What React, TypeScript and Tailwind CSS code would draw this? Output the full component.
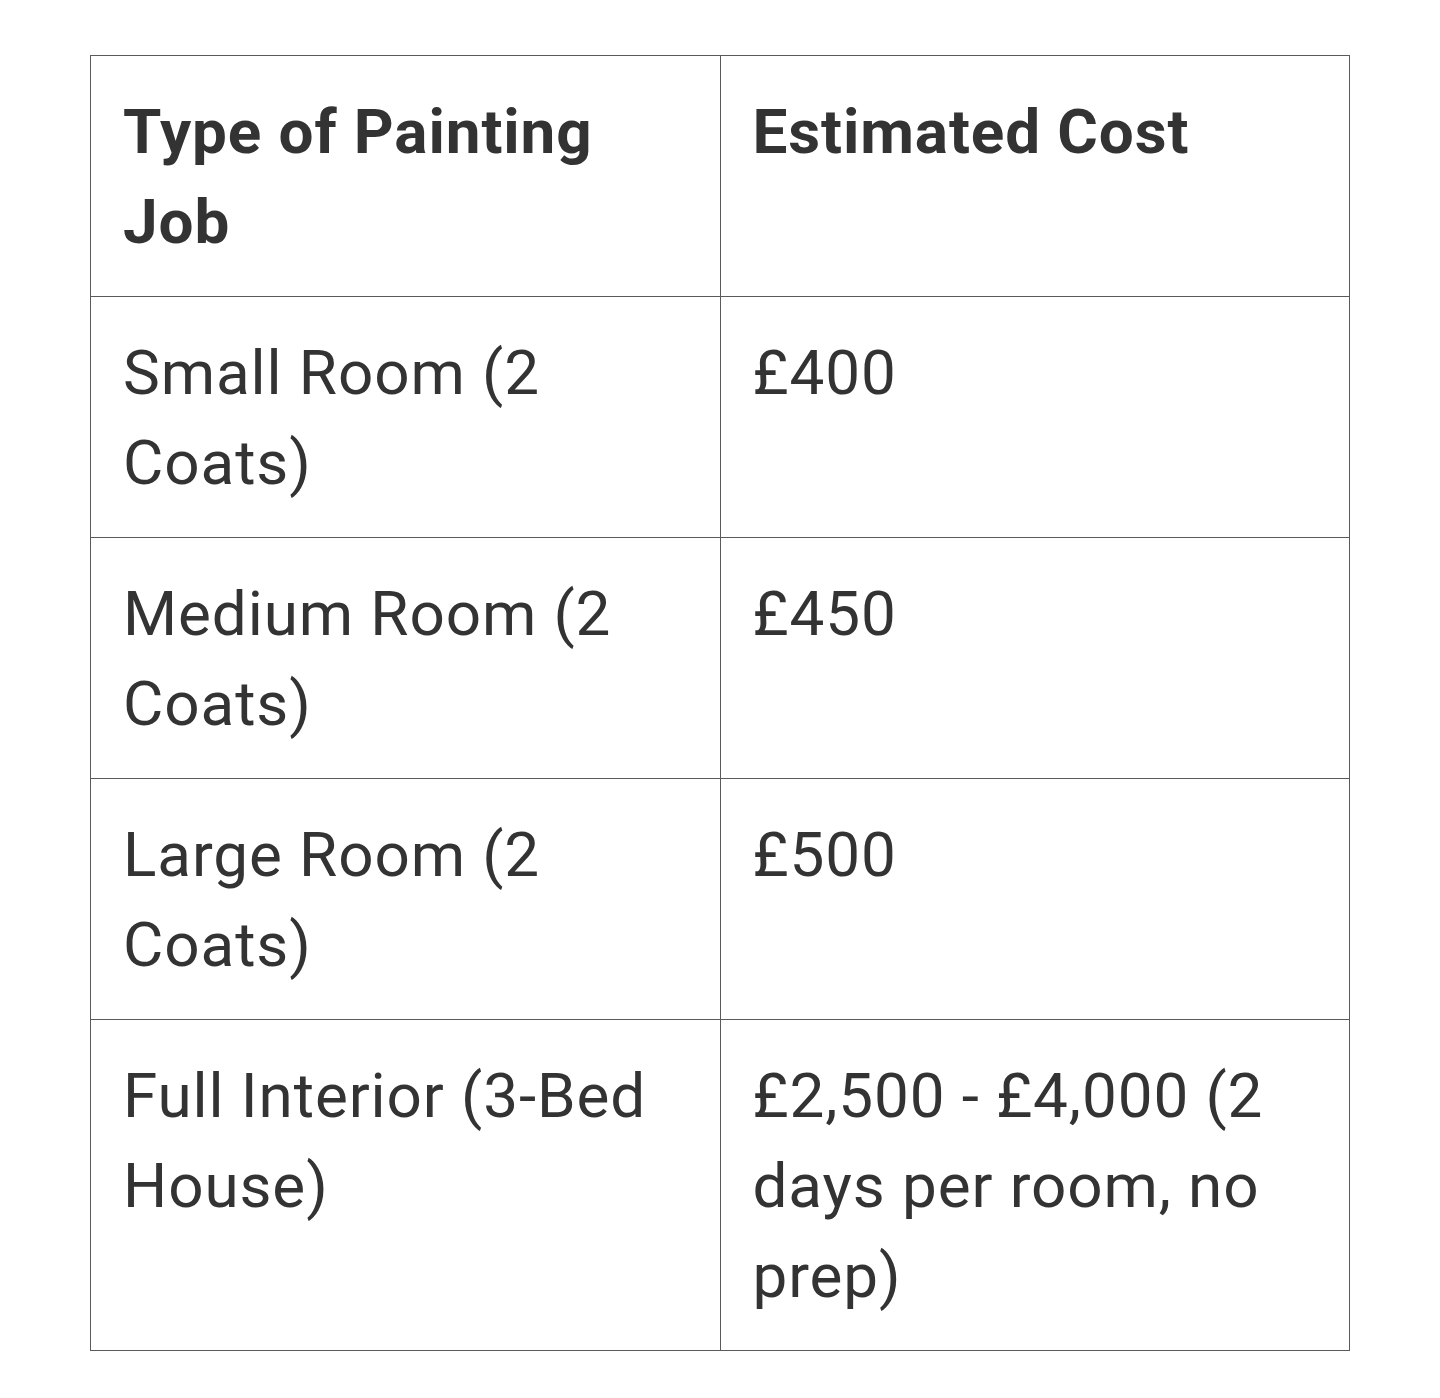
const rows = [
  ["Small Room (2 Coats)", "£400"],
  ["Medium Room (2 Coats)", "£450"],
  ["Large Room (2 Coats)", "£500"],
  ["Full Interior (3-Bed House)", "£2,500 - £4,000 (2 days per room, no prep)"],
];

export default function App() {
  return (
    <div className="min-h-[1398px] bg-white pt-[55px] px-[90px] font-['Roboto',sans-serif] text-[#333333]">
      <table className="w-[1260px] table-fixed border-collapse text-[62px] leading-[90px] tracking-[0.9px]">
        <thead>
          <tr>
            <th className="border border-[#5a5a5a] px-[32px] pt-[31px] pb-[29px] text-left align-top font-bold">
              Type of Painting Job
            </th>
            <th className="border border-[#5a5a5a] px-[32px] pt-[31px] pb-[29px] text-left align-top font-bold">
              Estimated Cost
            </th>
          </tr>
        </thead>
        <tbody>
          {rows.map(([type, cost]) => (
            <tr key={type}>
              <td className="border border-[#5a5a5a] px-[32px] pt-[31px] pb-[29px] align-top">{type}</td>
              <td className="border border-[#5a5a5a] px-[32px] pt-[31px] pb-[29px] align-top">{cost}</td>
            </tr>
          ))}
        </tbody>
      </table>
    </div>
  );
}
